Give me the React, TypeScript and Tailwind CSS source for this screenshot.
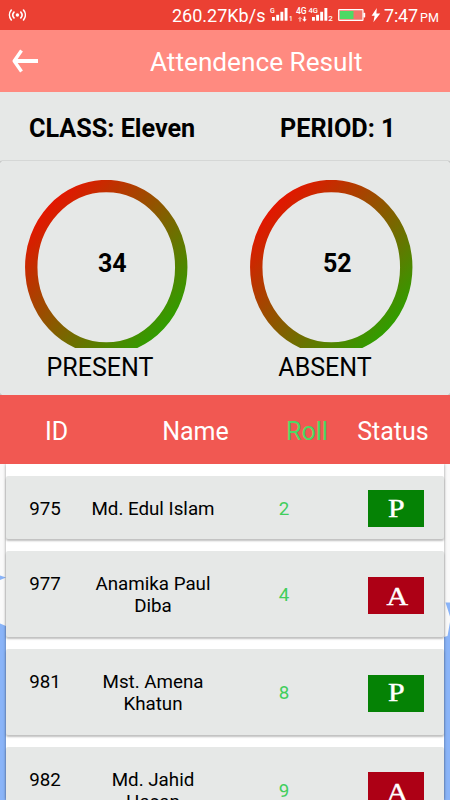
import clsx from "clsx";

type Student = {
  id: number;
  name: string;
  roll: number;
  present: boolean;
};

const students: Student[] = [
  { id: 975, name: "Md. Edul Islam", roll: 2, present: true },
  { id: 977, name: "Anamika Paul Diba", roll: 4, present: false },
  { id: 981, name: "Mst. Amena Khatun", roll: 8, present: true },
  { id: 982, name: "Md. Jahid Hasan", roll: 9, present: false },
];

function StatusIcons() {
  return (
    <svg width="118" height="30" viewBox="268 0 118 30" className="shrink-0" fill="white">
      <g fontFamily="Roboto, sans-serif" fontWeight="500">
        <text x="270" y="12.5" fontSize="7">G</text>
        <text x="289" y="20.5" fontSize="6.5">1</text>
        <text x="296" y="14" fontSize="8.5">4G</text>
        <text x="308.5" y="13" fontSize="7.5">4G</text>
        <text x="328.3" y="21" fontSize="8">2</text>
      </g>
      <rect x="272" y="17" width="2.9" height="3.7" />
      <rect x="276.2" y="14.8" width="2.9" height="5.9" />
      <rect x="280.4" y="11.8" width="2.9" height="8.9" />
      <rect x="284.6" y="8" width="2.9" height="12.7" />
      <path d="M300 16.500l2.200 2.500h-1.400v2.700h-1.600v-2.700h-1.400z" opacity=".55" />
      <path d="M304.500 21.700l-2.200-2.500h1.400v-2.700h1.600v2.700h1.400z" />
      <rect x="312" y="17" width="2.9" height="3.7" />
      <rect x="316.1" y="14.8" width="2.9" height="5.9" />
      <rect x="320.2" y="11.8" width="2.9" height="8.9" />
      <rect x="324.4" y="8" width="2.9" height="12.7" />
      <rect x="338.7" y="9.7" width="24.3" height="10.6" rx=".6" fill="#f0736a" stroke="white" strokeWidth="1.2" />
      <rect x="340" y="11" width="13.5" height="8" fill="#4cd964" />
      <rect x="363.3" y="12.8" width="1.9" height="4.6" rx=".6" />
      <path d="M376.800 8l-5.200 7.800h3l-1.200 6.400 6.800-8.800h-3.800z" />
    </svg>
  );
}

function StatusBar() {
  return (
    <div className="flex h-[30px] items-center bg-[#eb4033] text-white">
      <svg width="18" height="14" viewBox="0 0 18 14" className="ml-2 shrink-0" fill="none" stroke="white" strokeWidth="1.6" strokeLinecap="round">
        <circle cx="9.4" cy="7" r="1.7" fill="white" stroke="none" />
        <path d="M6 4.100a4.300 4.300 0 0 0 0 5.800M12.800 4.100a4.300 4.300 0 0 1 0 5.800M3.300 2.100a7.600 7.600 0 0 0 0 9.800M15.500 2.100a7.600 7.600 0 0 1 0 9.800" />
      </svg>
      <span className="ml-[146px] w-24 shrink-0 pt-0.5 text-[18px] leading-none">260.27Kb/s</span>
      <StatusIcons />
      <span className="-ml-[5px] mt-0.5 flex items-baseline gap-[3px] whitespace-nowrap text-[18px] leading-none">
        <span className="ml-[3px] w-[33px] tracking-[-0.2px]">7:47</span>
        <span className="text-[12.5px]">PM</span>
      </span>
    </div>
  );
}

function AppBar() {
  return (
    <div className="flex h-[62px] items-center bg-[#ff8a80] text-white">
      <svg width="28" height="26" viewBox="0 0 28 26" className="ml-[11px]" fill="none" stroke="white" strokeWidth="4">
        <path d="M27 13H4" />
        <path d="M10.500 2.500L3.200 13l7.300 10.500" strokeWidth="3.4" strokeLinejoin="round" />
      </svg>
      <h1 className="ml-[111px] whitespace-nowrap pt-[3px] text-[26.2px] leading-none">Attendence Result</h1>
    </div>
  );
}

function Ring({ id, value, label }: { id: string; value: number; label: string }) {
  return (
    <div className="relative w-[225px]">
      <svg width="163" height="168" viewBox="0 0 163 168" className="ml-[25px] mt-[19px] overflow-hidden" fill="none">
        <defs>
          <linearGradient id={id} x1="0.12" y1="0.12" x2="0.88" y2="0.88">
            <stop offset="0" stopColor="#e31600" />
            <stop offset="1" stopColor="#319d00" />
          </linearGradient>
        </defs>
        <ellipse cx="81.25" cy="87.25" rx="75" ry="81.2" stroke={`url(#${id})`} strokeWidth="12.4" />
      </svg>
      <span className="absolute left-[98px] top-[88px] text-[25px] font-bold leading-[30px]">{value}</span>
      <p className="mt-[5px] w-[200px] text-center text-[25px] leading-[30px]">{label}</p>
    </div>
  );
}

function Badge({ present }: { present: boolean }) {
  return (
    <span
      className={clsx(
        "flex h-[37px] w-14 items-center justify-center font-['Liberation_Serif',serif] text-[26px] leading-none text-white [-webkit-text-stroke:0.4px_white]",
        present ? "bg-[#058205]" : "bg-[#ad0015]",
      )}
    >
      <span className={present ? "scale-x-[1.15]" : "translate-x-px translate-y-0.5 scale-x-[1.15]"}>{present ? "P" : "A"}</span>
    </span>
  );
}

function StudentRow({ student }: { student: Student }) {
  return (
    <div className="grid shrink-0 grid-cols-[78px_138px_124px_98px] rounded-[2px] bg-[#e6e8e7] pb-[19.75px] pt-[22px] text-center text-[18.75px] leading-[22px] shadow-[0_2px_2px_rgba(0,0,0,0.25)]">
      <span>{student.id}</span>
      <span className="px-1.5">{student.name}</span>
      <span className="self-center text-[#41ce5c]">{student.roll}</span>
      <span className="-my-2 ml-[22px] self-center">
        <Badge present={student.present} />
      </span>
    </div>
  );
}

export default function App() {
  return (
    <div className="flex h-[800px] w-[450px] flex-col overflow-hidden bg-[#fafafa] font-[Roboto,sans-serif] text-black">
      <StatusBar />
      <AppBar />
      <div className="flex h-[69px] shrink-0 items-center bg-[#e6e8e7] pt-1 text-[25.2px] font-bold leading-none">
        <span className="w-[250px] pl-[29px]">CLASS: Eleven</span>
        <span className="pl-[30px]">PERIOD: 1</span>
      </div>
      <div className="flex h-[234px] shrink-0 rounded-[2px] bg-[#e6e8e7] shadow-[0_0_1px_rgba(0,0,0,0.7)]">
        <Ring id="present" value={34} label="PRESENT" />
        <Ring id="absent" value={52} label="ABSENT" />
      </div>
      <div className="z-10 grid h-[68.5px] shrink-0 grid-cols-[113px_165px_58px_114px] items-center bg-[#f15852] pt-1 text-center text-[25px] text-white">
        <span>ID</span>
        <span>Name</span>
        <span className="text-[#4cd964]">Roll</span>
        <span>Status</span>
      </div>
      <div className="relative min-h-0 flex-1 px-1.5">
        <svg width="450" height="336" viewBox="0 464 450 336" className="absolute left-0 top-0" fill="#8ab4f8">
          <path d="M0 575.500l6 2-6 2.500zM0 623.500l6 2.500v174H0zM445.500 602.500h4.500v14zM450 622l-2.500 14-3.500 1v163h6z" />
        </svg>
        <div className="relative flex h-full flex-col gap-3 bg-white pt-3 shadow-[0_0_3px_rgba(0,0,0,0.4)]">
          {students.map((student) => (
            <StudentRow key={student.id} student={student} />
          ))}
        </div>
      </div>
    </div>
  );
}
